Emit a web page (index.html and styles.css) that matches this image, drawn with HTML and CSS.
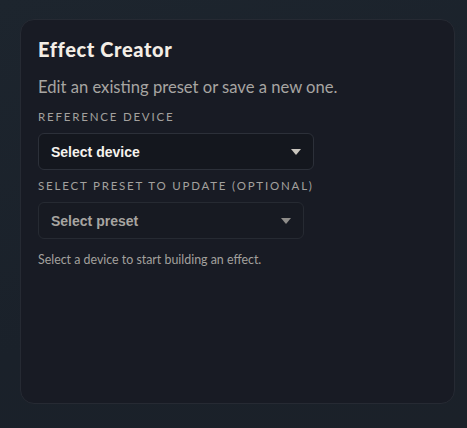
FILE: index.html
```html
<!DOCTYPE html>
<html>
<head>
<meta charset="utf-8">
<link rel="stylesheet" href="styles.css">
</head>
<body>
<div class="page">
  <section class="card">
    <h1 class="title">Effect Creator</h1>
    <p class="subtitle">Edit an existing preset or save a new one.</p>
    <div class="field">
      <div class="label">REFERENCE DEVICE</div>
      <div class="select select-device">
        <span class="select-text">Select device</span>
        <span class="caret"></span>
      </div>
    </div>
    <div class="field">
      <div class="label">SELECT PRESET TO UPDATE (OPTIONAL)</div>
      <div class="select select-preset disabled">
        <span class="select-text">Select preset</span>
        <span class="caret"></span>
      </div>
    </div>
    <p class="hint">Select a device to start building an effect.</p>
  </section>
</div>
</body>
</html>
```
FILE: styles.css
```css
html, body {
  margin: 0;
  padding: 0;
}
body {
  width: 467px;
  height: 428px;
  overflow: hidden;
  background: linear-gradient(160deg, #1d252e 0%, #1a212a 60%, #1b2129 100%);
  font-family: Lato, "Noto Sans", sans-serif;
}
.page {
  padding: 19px 12px 0 20px;
}
.card {
  box-sizing: border-box;
  width: 435px;
  height: 385px;
  background: #181b24;
  border: 1px solid #262a33;
  border-radius: 14px;
  padding: 17px 17px;
  display: flex;
  flex-direction: column;
}
.title {
  margin: 0;
  font-size: 20px;
  font-weight: 900;
  letter-spacing: 0.6px;
  color: #f3eee6;
  line-height: 24px;
}
.subtitle {
  margin: 15px 0 0;
  font-size: 16.6px;
  color: #a7a5a2;
  line-height: 22px;
}
.field {
  display: flex;
  flex-direction: column;
}
.label {
  margin-top: 12px;
  font-size: 11.5px;
  letter-spacing: 1.8px;
  color: #a3a19e;
  line-height: 14px;
}
.field + .field .label {
  margin-top: 9px;
}
.select {
  box-sizing: border-box;
  margin-top: 9px;
  height: 37px;
  border: 1px solid #2c3039;
  border-radius: 6px;
  background: #14171e;
  display: flex;
  align-items: center;
  justify-content: space-between;
  padding: 0 12px 0 12px;
}
.select-device { width: 276px; }
.select-preset { width: 266px; }
.select-text {
  font-family: "Liberation Sans", Arial, sans-serif;
  font-weight: 700;
  font-size: 14px;
  color: #f6f3ee;
}
.caret {
  width: 0;
  height: 0;
  border-left: 5px solid transparent;
  border-right: 5px solid transparent;
  border-top: 6px solid #c9c5be;
}
.disabled { background: #171a22; border-color: #262a32; }
.disabled .select-text { color: #a7a5a1; }
.disabled .caret { border-top-color: #8f8d8a; }
.hint {
  margin: 14px 0 0;
  font-size: 12.4px;
  color: #a3a19e;
  line-height: 14px;
}
```
